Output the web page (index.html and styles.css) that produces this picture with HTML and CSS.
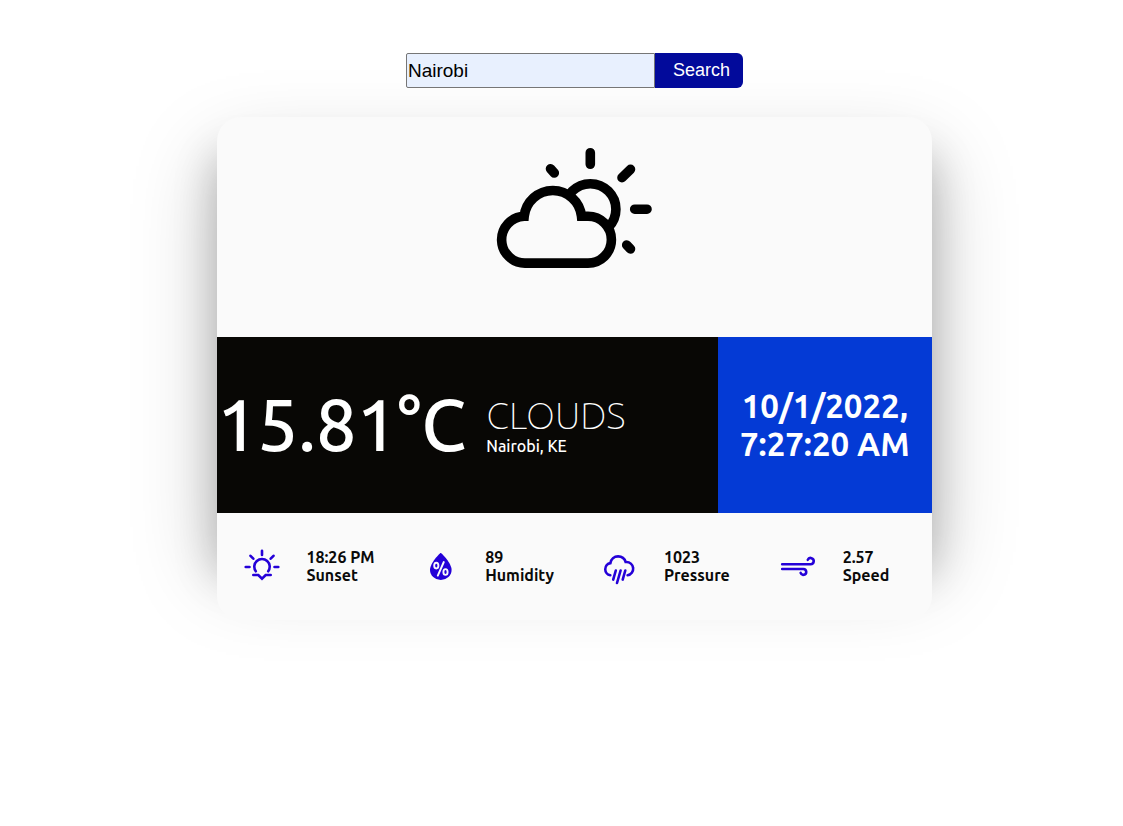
FILE: index.html
```html
<!DOCTYPE html>
<html lang="en">
<head>
<meta charset="utf-8">
<meta name="viewport" content="width=device-width, initial-scale=1">
<title>Weather</title>
<link rel="stylesheet" href="styles.css">
</head>
<body>
<main class="page">
  <form class="search">
    <input class="search-input" type="text" name="city" value="Nairobi" aria-label="City">
    <button class="search-button" type="button">Search</button>
  </form>

  <section class="card">
    <div class="hero">
      <svg class="hero-icon" viewBox="15 15 160 125" fill="none" stroke="#000" stroke-width="9.6" aria-hidden="true">
        <circle cx="110.3" cy="79.3" r="25.6"/>
        <path fill="#fafafa" d="M44.2 86.3A23.4 23.4 0 0 0 45.9 133.1H108A23.4 23.4 0 0 0 108 86.3H101.5A28.8 28.8 0 0 0 44.2 86.3Z"/>
        <path stroke-linecap="round" d="M110.3 22.7V34.3M154.7 79.2H167M142 47.7L150.5 39.3M70.5 38.8L74.3 43M146.7 115L150.5 119"/>
      </svg>
    </div>

    <div class="summary">
      <div class="conditions">
        <div class="temperature">15.81°C</div>
        <div class="place">
          <div class="description">CLOUDS</div>
          <div class="city">Nairobi, KE</div>
        </div>
      </div>
      <div class="date">10/1/2022, 7:27:20 AM</div>
    </div>

    <div class="details">
      <div class="detail">
        <svg class="detail-icon" viewBox="11.7 11 40 40" aria-hidden="true">
          <path d="M25.5 36.3A7.7 7.7 0 1 1 37.9 36.3M31.7 15.8V20M15.4 32H19.2M44.2 32H48M20.2 20.8L23 23.7M43.2 20.8L40.4 23.7M23 40H28L31.7 43.7L35.4 40H40.4"/>
        </svg>
        <div class="detail-text">18:26 PM<br>Sunset</div>
      </div>
      <div class="detail">
        <svg class="detail-icon" viewBox="10 11 40 40" aria-hidden="true">
          <path class="drop" d="M30.7 18C29.6 18 20 28.5 20 34.8A10.8 10.3 0 0 0 41.6 34.8C41.6 28.5 31.8 18 30.7 18Z"/>
          <path class="percent" d="M33.8 27L27.8 40.6"/>
          <ellipse class="percent" cx="26.3" cy="30.6" rx="2.1" ry="2.9"/>
          <ellipse class="percent" cx="35.5" cy="37" rx="2.1" ry="2.9"/>
        </svg>
        <div class="detail-text">89<br>Humidity</div>
      </div>
      <div class="detail">
        <svg class="detail-icon" viewBox="9 11 40 40" aria-hidden="true">
          <path d="M20.3 40.3A6.2 6.2 0 0 1 20.4 28.1C21 24 24.2 21.4 28.1 21.4C31.6 21.4 34.6 23.6 35.6 27H36.2A6.7 6.7 0 0 1 37.6 40.3M25.8 35.5L23.2 44.6M30.6 35.5L27 48M35.3 35.5L32.7 44.6"/>
        </svg>
        <div class="detail-text">1023<br>Pressure</div>
      </div>
      <div class="detail">
        <svg class="detail-icon" viewBox="13 11 40 40" aria-hidden="true">
          <path d="M17.2 29.2H45.6A3.1 3.1 0 1 0 42.8 24.8M17.2 34H38.4A2.9 2.9 0 1 1 35.6 37.9"/>
        </svg>
        <div class="detail-text">2.57<br>Speed</div>
      </div>
    </div>
  </section>
</main>
</body>
</html>
```
FILE: styles.css
```css
* {
  box-sizing: border-box;
}

body {
  margin: 0;
  background: #fff;
  color: #0a0a0a;
  font-family: Ubuntu, "Noto Sans", sans-serif;
}

.page {
  display: flex;
  flex-direction: column;
  align-items: center;
  gap: 29px;
  padding: 53px 0 53px 26px;
}

.search {
  display: flex;
  position: relative;
  z-index: 1;
}

.search-input,
.search-button {
  height: 35px;
  font-family: "Liberation Sans", Arial, sans-serif;
}

.search-input {
  width: 249px;
  padding: 1px;
  border: 1px solid #767676;
  border-radius: 2px 0 0 2px;
  background: #e8f0fe;
  color: #000;
  font-size: 19px;
}

.search-button {
  padding: 0 13px 0 18px;
  border: 0;
  border-radius: 0 6px 6px 0;
  background: #020a9b;
  color: #fff;
  font-size: 18px;
}

.card {
  position: relative;
  z-index: 0;
  width: 100%;
  max-width: 715px;
}

.card::before {
  content: "";
  position: absolute;
  z-index: -1;
  inset: 40px 0 46px;
  box-shadow: 0 0 80px rgba(0, 0, 0, 0.22), 0 0 40px rgba(0, 0, 0, 0.22);
}

.hero {
  display: flex;
  justify-content: center;
  padding: 28px 0 67px;
  border-radius: 24px 24px 0 0;
  background: #fafafa;
}

.hero-icon {
  width: 160px;
  height: 125px;
}

.summary {
  display: grid;
  grid-template-columns: 7fr 3fr;
  min-height: 176px;
  color: #fff;
}

.conditions {
  display: flex;
  align-items: center;
  gap: 20px;
  background: #080705;
}

.temperature {
  font-size: 72px;
  font-weight: 500;
  line-height: 82px;
}

.description {
  font-size: 38px;
  font-weight: 100;
  line-height: 42px;
}

.city {
  font-size: 16px;
  font-weight: 500;
  line-height: 20px;
}

.date {
  display: flex;
  align-items: center;
  padding: 0 20px;
  background: #043ad5;
  font-size: 33px;
  font-weight: 700;
  line-height: 38px;
  text-align: center;
}

.details {
  display: grid;
  grid-template-columns: repeat(4, 1fr);
  padding: 35px 0 36px;
  border-radius: 0 0 24px 24px;
  background: #fafafa;
}

.detail {
  display: grid;
  grid-template-columns: 1fr 1fr;
  align-items: center;
}

.detail-icon {
  justify-self: center;
  width: 40px;
  height: 40px;
  margin: -2px 0;
  fill: none;
  stroke: #2400d8;
  stroke-width: 2.6;
  stroke-linecap: round;
}

.detail-icon .drop {
  fill: #2400d8;
  stroke: none;
}

.detail-icon .percent {
  stroke: #fafafa;
  stroke-width: 1.9;
}

.detail-text {
  font-size: 16px;
  font-weight: 700;
  line-height: 18px;
}
```
